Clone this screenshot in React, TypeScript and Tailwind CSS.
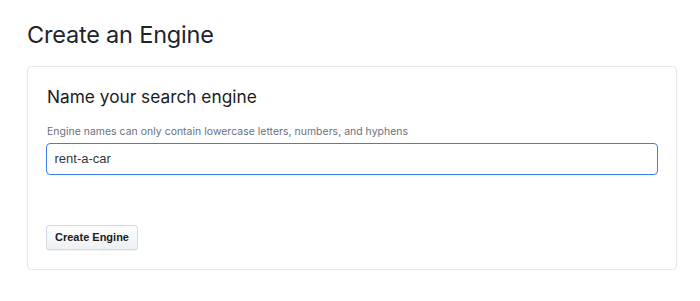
import React from "react";

export default function App() {
  return (
    <div className="w-[700px] h-[301px] bg-white overflow-hidden" style={{ fontFamily: "Inter, 'Noto Sans', sans-serif" }}>
      <div className="pl-[27px] pr-[24px] pt-[19px]">
        <h1 className="text-[23.5px] leading-[32px] text-[#1d2430] font-normal tracking-[-0.2px]">Create an Engine</h1>
        <div className="mt-[15px] w-[650px] h-[204px] border border-[#e6e9ef] rounded-[4px] px-[18px] pt-[18px]">
          <h2 className="pl-[1px] text-[17.3px] leading-[24px] text-[#1a1c21] font-normal">Name your search engine</h2>
          <p className="pl-[1px] mt-[16px] text-[10.4px] leading-[14px] text-[#69707d] tracking-[0.05px]">
            Engine names can only contain lowercase letters, numbers, and hyphens
          </p>
          <div className="mt-[4px] w-[612px] h-[32px] border-[1.5px] border-[#3b7cf0] rounded-[4px] flex items-center pl-[7.5px]">
            <span className="text-[13px] text-[#343741]" style={{ fontFamily: "'Liberation Sans', Arial, sans-serif" }}>rent-a-car</span>
          </div>
          <button
            className="mt-[50px] h-[25px] w-[92px] rounded-[3px] border border-[#d3dae6] bg-gradient-to-b from-[#fdfdfd] to-[#eef1f4] text-[11px] font-bold text-[#1a1c21] shadow-[0_1px_1px_rgba(0,0,0,0.06)]"
            style={{ fontFamily: "'Liberation Sans', Arial, sans-serif" }}
          >
            Create Engine
          </button>
        </div>
      </div>
    </div>
  );
}
